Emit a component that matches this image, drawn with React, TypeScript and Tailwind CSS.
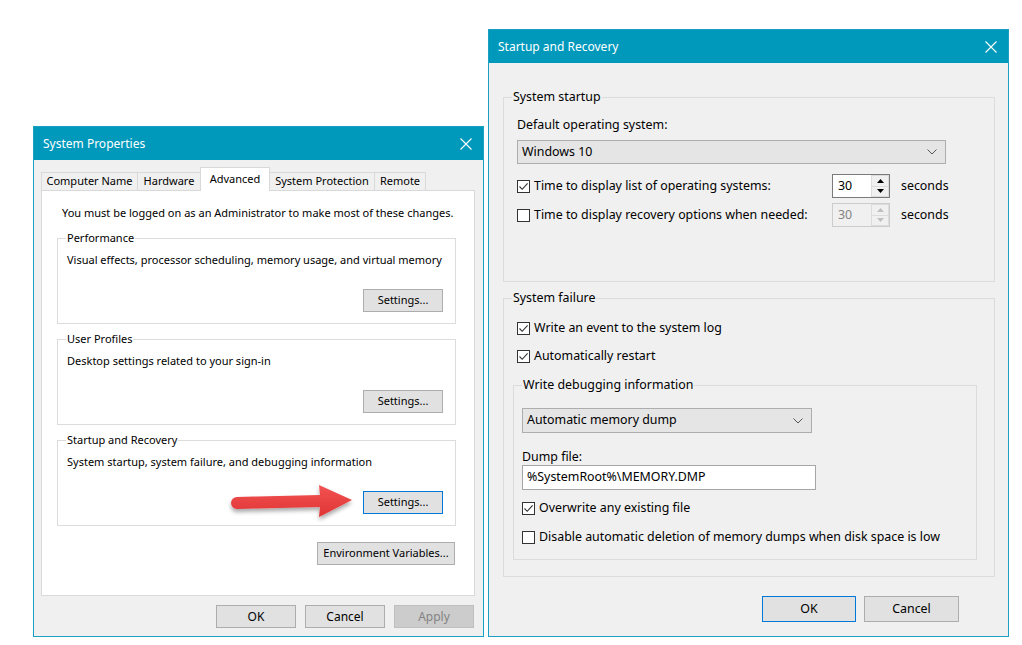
import type { ReactNode } from 'react';

function CloseIcon() {
  return (
    <svg width="12" height="12" viewBox="0 0 12 12" className="shrink-0">
      <path d="M0.5 0.5L11.5 11.5M11.5 0.5L0.5 11.5" stroke="#ffffff" strokeWidth="1.1" />
    </svg>
  );
}

function TitleBar({ title }: { title: string }) {
  return (
    <div className="flex h-[33px] shrink-0 items-center justify-between bg-[#0099bc] pl-[9px] pr-[11px] text-[12px] text-white">
      <span>{title}</span>
      <CloseIcon />
    </div>
  );
}

function Btn({
  children,
  focused,
  disabled,
  className = '',
}: {
  children: ReactNode;
  focused?: boolean;
  disabled?: boolean;
  className?: string;
}) {
  const tone = disabled
    ? 'border-[#bfbfbf] bg-[#cccccc] text-[#838383]'
    : focused
      ? 'border-[#0078d7] bg-[#e1e1e1] text-black'
      : 'border-[#adadad] bg-[#e1e1e1] text-black';
  return (
    <div className={`flex items-center justify-center whitespace-nowrap border ${tone} ${className}`}>
      {children}
    </div>
  );
}

function Group({
  label,
  className = '',
  children,
}: {
  label: string;
  className?: string;
  children: ReactNode;
}) {
  return (
    <fieldset className={`border border-[#dcdcdc] ${className}`}>
      <legend className="ml-[8px] px-[1px] leading-[16px]">{label}</legend>
      {children}
    </fieldset>
  );
}

function Check({ checked, children }: { checked?: boolean; children: ReactNode }) {
  return (
    <div className="flex h-[16px] items-center gap-[4px]">
      <span className="flex h-[13px] w-[13px] shrink-0 items-center justify-center border border-[#333333] bg-white">
        {checked && (
          <svg width="11" height="11" viewBox="0 0 11 11">
            <path d="M1.5 5.5L4.2 8.3L9.6 2.4" fill="none" stroke="#333333" strokeWidth="1.1" />
          </svg>
        )}
      </span>
      <span className="whitespace-nowrap">{children}</span>
    </div>
  );
}

function Chevron() {
  return (
    <svg width="10" height="6" viewBox="0 0 10 6">
      <path d="M0.5 0.5L5 5L9.5 0.5" fill="none" stroke="#555555" strokeWidth="1" />
    </svg>
  );
}

function Select({ value, className = '' }: { value: string; className?: string }) {
  return (
    <div
      className={`flex items-center justify-between border border-[#adadad] bg-[#e5e5e5] pl-[4px] pr-[8px] ${className}`}
    >
      <span>{value}</span>
      <Chevron />
    </div>
  );
}

function Spin({ value, disabled }: { value: string; disabled?: boolean }) {
  const arrow = disabled ? '#bfbfbf' : '#000000';
  return (
    <div
      className={`flex h-[24px] w-[58px] border ${
        disabled ? 'border-[#cccccc] bg-[#f0f0f0] text-[#838383]' : 'border-[#7a7a7a] bg-white text-black'
      }`}
    >
      <div className="flex flex-1 items-center pl-[5px]">{value}</div>
      <div className="flex w-[18px] flex-col">
        <div className="flex flex-1 items-center justify-center border border-[#dcdcdc] bg-[#f0f0f0]">
          <svg width="7" height="4" viewBox="0 0 7 4">
            <path d="M0 4L3.5 0L7 4Z" fill={arrow} />
          </svg>
        </div>
        <div className="flex flex-1 items-center justify-center border border-t-0 border-[#dcdcdc] bg-[#f0f0f0]">
          <svg width="7" height="4" viewBox="0 0 7 4">
            <path d="M0 0L3.5 4L7 0Z" fill={arrow} />
          </svg>
        </div>
      </div>
    </div>
  );
}

const tabs = [
  { name: 'Computer Name', w: 'w-[97px]' },
  { name: 'Hardware', w: 'w-[64px]' },
  { name: 'Advanced', w: 'w-[70px]', active: true },
  { name: 'System Protection', w: 'w-[106px]' },
  { name: 'Remote', w: 'w-[52px]' },
];

function SystemProperties() {
  return (
    <div className="mt-[97px] flex h-[511px] w-[451px] shrink-0 flex-col border border-[#1ba0c4] bg-[#f0f0f0] text-[11px]">
      <TitleBar title="System Properties" />
      <div className="relative z-10 ml-[8px] mt-[7px] flex h-[23px] items-end">
        {tabs.map((t) =>
          t.active ? (
            <div
              key={t.name}
              className={`-mb-px -ml-px flex h-[24px] ${t.w} items-start justify-center whitespace-nowrap border border-b-0 border-[#d9d9d9] bg-white pt-[3px]`}
            >
              {t.name}
            </div>
          ) : (
            <div
              key={t.name}
              className={`-ml-px flex h-[18px] ${t.w} items-center justify-center whitespace-nowrap border border-b-0 border-[#d9d9d9] bg-[#f0f0f0]`}
            >
              {t.name}
            </div>
          ),
        )}
      </div>
      <div className="ml-[7px] flex h-[406px] w-[434px] flex-col border border-[#d9d9d9] bg-white pl-[15px] pr-[18px] pt-[14px]">
        <p className="whitespace-nowrap pl-[5px] leading-[16px]">
          You must be logged on as an Administrator to make most of these changes.
        </p>
        <Group label="Performance" className="mt-[9px] h-[94px]">
          <p className="whitespace-nowrap pl-[9px] pt-[6px] leading-[16px]">
            Visual effects, processor scheduling, memory usage, and virtual memory
          </p>
          <div className="mt-[21px] flex justify-end pr-[12px]">
            <Btn className="h-[23px] w-[80px]">Settings...</Btn>
          </div>
        </Group>
        <Group label="User Profiles" className="mt-[7px] h-[94px]">
          <p className="whitespace-nowrap pl-[9px] pt-[6px] leading-[16px]">
            Desktop settings related to your sign-in
          </p>
          <div className="mt-[21px] flex justify-end pr-[12px]">
            <Btn className="h-[23px] w-[80px]">Settings...</Btn>
          </div>
        </Group>
        <Group label="Startup and Recovery" className="mt-[7px] h-[94px]">
          <p className="whitespace-nowrap pl-[9px] pt-[6px] leading-[16px]">
            System startup, system failure, and debugging information
          </p>
          <div className="mt-[21px] flex justify-end pr-[12px]">
            <Btn focused className="h-[23px] w-[80px]">
              Settings...
            </Btn>
          </div>
        </Group>
        <div className="mt-[16px] flex justify-end pr-[1px]">
          <Btn className="h-[23px] w-[138px]">Environment Variables...</Btn>
        </div>
      </div>
      <div className="mt-[9px] flex justify-end gap-[9px] pr-[9px] text-[12px]">
        <Btn className="h-[23px] w-[80px]">OK</Btn>
        <Btn className="h-[23px] w-[80px]">Cancel</Btn>
        <Btn disabled className="h-[23px] w-[80px]">
          Apply
        </Btn>
      </div>
    </div>
  );
}

function StartupAndRecovery() {
  return (
    <div className="flex h-[608px] w-[521px] shrink-0 flex-col border border-[#1ba0c4] bg-[#f0f0f0] text-[12.4px]">
      <TitleBar title="Startup and Recovery" />
      <div className="pl-[14px]">
        <Group label="System startup" className="mt-[26px] h-[193px] w-[492px]">
          <div className="pl-[13px]">
            <p className="mt-[12px] leading-[16px]">Default operating system:</p>
            <Select value="Windows 10" className="mt-[7px] h-[24px] w-[429px]" />
            <div className="mt-[10px] flex items-center">
              <div className="w-[315px]">
                <Check checked>Time to display list of operating systems:</Check>
              </div>
              <Spin value="30" />
              <span className="ml-[11px]">seconds</span>
            </div>
            <div className="mt-[5px] flex items-center">
              <div className="w-[315px]">
                <Check>Time to display recovery options when needed:</Check>
              </div>
              <Spin value="30" disabled />
              <span className="ml-[11px]">seconds</span>
            </div>
          </div>
        </Group>
        <Group label="System failure" className="mt-[8px] h-[287px] w-[492px]">
          <div className="mt-[14px] pl-[13px]">
            <Check checked>Write an event to the system log</Check>
          </div>
          <div className="mt-[12px] pl-[13px]">
            <Check checked>Automatically restart</Check>
          </div>
          <Group label="Write debugging information" className="ml-[9px] mt-[13px] h-[183px] w-[464px]">
            <div className="pl-[8px]">
              <Select value="Automatic memory dump" className="mt-[15px] h-[25px] w-[290px]" />
              <p className="mt-[16px] leading-[16px]">Dump file:</p>
              <div className="flex h-[25px] w-[294px] items-center border border-[#a6a6a6] bg-white pl-[4px]">
                %SystemRoot%\MEMORY.DMP
              </div>
              <div className="mt-[10px]">
                <Check checked>Overwrite any existing file</Check>
              </div>
              <div className="mt-[13px]">
                <Check>Disable automatic deletion of memory dumps when disk space is low</Check>
              </div>
            </div>
          </Group>
        </Group>
      </div>
      <div className="mt-[19px] flex justify-end gap-[8px] pr-[49px]">
        <Btn focused className="h-[26px] w-[94px]">
          OK
        </Btn>
        <Btn className="h-[26px] w-[95px]">Cancel</Btn>
      </div>
    </div>
  );
}

function RedArrow() {
  return (
    <svg
      className="pointer-events-none absolute left-[228px] top-[480px]"
      width="132"
      height="46"
      viewBox="0 0 132 46"
    >
      <defs>
        <filter id="arrowShadow" x="-10%" y="-30%" width="130%" height="170%">
          <feDropShadow dx="0" dy="3" stdDeviation="2" floodColor="#000000" floodOpacity="0.35" />
        </filter>
        <linearGradient id="arrowFill" x1="0" y1="0" x2="0" y2="1">
          <stop offset="0" stopColor="#f25353" />
          <stop offset="1" stopColor="#e03434" />
        </linearGradient>
      </defs>
      <path
        d="M9 17L92 15L91 5L124 20L91 37L92 27L9 29A6 6 0 0 1 9 17Z"
        fill="url(#arrowFill)"
        filter="url(#arrowShadow)"
      />
    </svg>
  );
}

export default function App() {
  return (
    <div className="relative min-h-[645px] w-[1022px] bg-white font-['Segoe_UI','Noto_Sans',sans-serif] text-black">
      <div className="flex gap-[4px] pl-[33px] pt-[29px]">
        <SystemProperties />
        <StartupAndRecovery />
      </div>
      <RedArrow />
    </div>
  );
}
